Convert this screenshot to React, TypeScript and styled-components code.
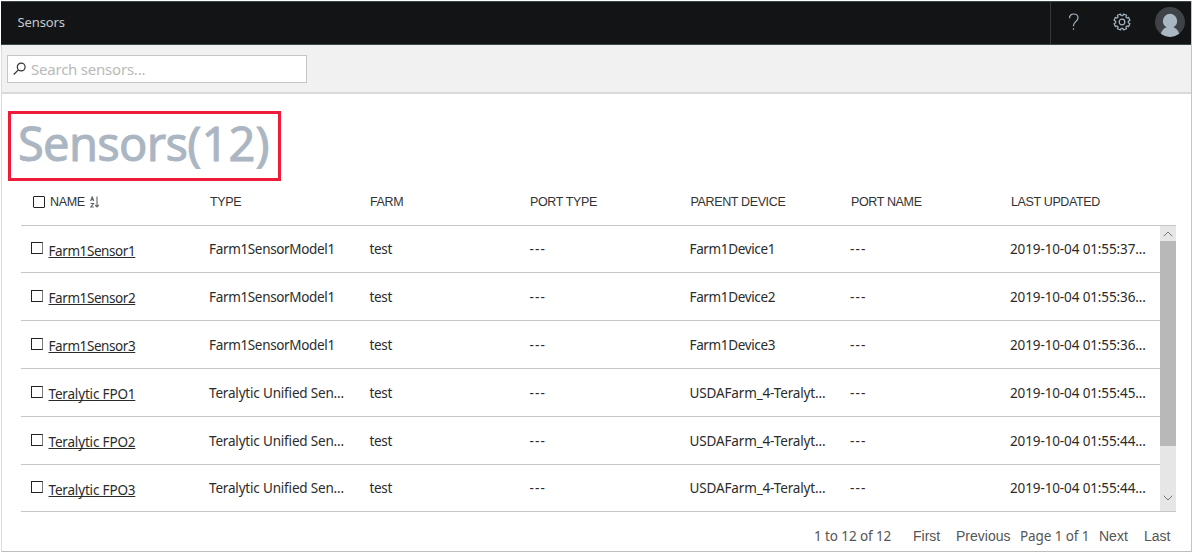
import React from "react";
import styled, { createGlobalStyle } from "styled-components";

const Global = createGlobalStyle`
  * { box-sizing: border-box; }
  body { margin: 0; background: #fff; }
  button, input { font: inherit; border: 0; padding: 0; background: none; }
`;

const Page = styled.div`
  width: 1192px;
  height: 552px;
  padding-top: 1px;
  display: flex;
  flex-direction: column;
  border-left: 1px solid #fff;
  overflow: hidden;
  font-family: "Noto Sans", "Open Sans", sans-serif;
  color: #2b2b2b;
`;

const Frame = styled.div`
  flex: 1;
  min-height: 0;
  display: flex;
  flex-direction: column;
  border-left: 1px solid #dcdcdc;
  border-right: 1px solid #c4c4c4;
  border-bottom: 1px solid #bdbdbd;
`;

const TopBar = styled.header`
  height: 44px;
  margin-left: -1px;
  flex: none;
  display: flex;
  align-items: center;
  background: #121416;
  border-top: 1px solid #3a4746;
  border-bottom: 1px solid #3a4746;
  color: #c3cad0;
`;

const TopTitle = styled.div`
  flex: 1;
  padding: 0 0 2px 16.5px;
  font-size: 13px;
  letter-spacing: -0.1px;
`;

const TopActions = styled.div`
  height: 100%;
  width: 141px;
  display: flex;
  align-items: center;
  border-left: 1px solid #34383b;
  padding: 0 0 3px 17px;

  svg { display: block; flex: none; }
  svg + svg { margin-left: 33px; }
  svg:last-child { margin-left: 24px; }
`;

const SearchBar = styled.div`
  height: 49px;
  flex: none;
  padding: 10px 0 0 5px;
  background: #f1f1f1;
  border-bottom: 2px solid #dadada;
`;

const SearchBox = styled.label`
  width: 300px;
  height: 28px;
  display: flex;
  align-items: center;
  background: #fff;
  border: 1px solid #c6c6c6;
  padding-left: 4px;
`;

const SearchInput = styled.input`
  flex: 1;
  min-width: 0;
  height: 24px;
  margin-left: 5px;
  outline: none;
  font-size: 15px;
  letter-spacing: -0.22px;
  &::placeholder { color: #b9b9b9; opacity: 1; }
`;

const Heading = styled.h1`
  width: 273px;
  height: 70px;
  margin: 17px 0 0 6px;
  padding-left: 7px;
  flex: none;
  border: 3px solid #ee1c3a;
  font-size: 47px;
  font-weight: 400;
  line-height: 59px;
  letter-spacing: -0.7px;
  color: #abb6c2;
  -webkit-text-stroke: 0.9px #abb6c2;
  white-space: nowrap;
`;

const Count = styled.span`
  letter-spacing: 0.1px;
`;

const Grid = styled.section`
  width: 1155px;
  margin-left: 19px;
  flex: none;
`;

const HeaderRow = styled.div`
  height: 45px;
  display: grid;
  grid-template-columns: 189px 160px 160px 160.5px 160.5px 160px 1fr;
  align-items: center;
  padding-bottom: 3px;
  border-bottom: 1px solid #c6c6c6;
  font: 12.5px "Liberation Sans", Arial, sans-serif;
  letter-spacing: -0.36px;
  color: #333;
`;

const NameHeader = styled.div`
  display: flex;
  align-items: center;
  padding-left: 12px;
  svg { margin-left: 5px; }
`;

const CheckBox = styled.span<{ $head?: boolean }>`
  width: 12px;
  height: 12px;
  flex: none;
  border: 1px solid #222;
  border-radius: ${(p) => (p.$head ? "1px" : "0")};
  margin-right: ${(p) => (p.$head ? "5px" : "5.5px")};
  ${(p) => !p.$head && "margin-top: -2px; border-right-color: #777;"}
`;

const Body = styled.div`
  display: flex;
  height: 286px;
`;

const Rows = styled.div`
  width: 1139px;
`;

const Row = styled.div<{ $height: number }>`
  height: ${(p) => p.$height}px;
  display: grid;
  grid-template-columns: 188px 160.5px 160px 160px 160.5px 160px 1fr;
  align-items: center;
  border-bottom: 1px solid #c6c6c6;
  font-size: 13.5px;
`;

const Cell = styled.div<{ $spacing?: number }>`
  white-space: nowrap;
  letter-spacing: ${(p) => p.$spacing ?? -0.34}px;
`;

const NameCell = styled.div`
  display: flex;
  align-items: center;
  padding-left: 10px;
`;

const NameLink = styled.a<{ $spacing: number }>`
  margin-top: 3px;
  line-height: 16px;
  white-space: nowrap;
  letter-spacing: ${(p) => p.$spacing}px;
  text-decoration: underline;
  text-decoration-skip-ink: none;
  text-underline-offset: 1px;
  text-decoration-thickness: 1px;
`;

const ScrollBar = styled.div`
  width: 16px;
  display: flex;
  flex-direction: column;
  background: #e6e6e6;
  border-bottom: 1px solid #c6c6c6;
`;

const ScrollButton = styled.div`
  height: 15px;
  display: flex;
  align-items: center;
  justify-content: center;
`;

const Thumb = styled.div`
  height: 205px;
  margin-bottom: 44px;
  background: #b8b8b8;
`;

const Pager = styled.footer`
  height: 39px;
  display: flex;
  align-items: center;
  padding: 8px 17px 0 812px;
  color: #555;
  white-space: nowrap;
`;

const PagerText = styled.span<{ $width: number }>`
  width: ${(p) => p.$width}px;
  font-size: 13.5px;
  letter-spacing: -0.1px;
`;

const PagerButton = styled.button<{ $width: number }>`
  && {
    width: ${(p) => p.$width}px;
    text-align: left;
    font: 14px "Liberation Sans", Arial, sans-serif;
    color: #555;
  }
`;

const headers = ["TYPE", "FARM", "PORT TYPE", "PARENT DEVICE", "PORT NAME", "LAST UPDATED"];

const unified = "Teralytic Unified Sen...";
const usda = "USDAFarm_4-Teralyt...";

const sensors = [
  { name: "Farm1Sensor1", type: "Farm1SensorModel1", parent: "Farm1Device1", updated: "2019-10-04 01:55:37...", height: 47 },
  { name: "Farm1Sensor2", type: "Farm1SensorModel1", parent: "Farm1Device2", updated: "2019-10-04 01:55:36...", height: 48 },
  { name: "Farm1Sensor3", type: "Farm1SensorModel1", parent: "Farm1Device3", updated: "2019-10-04 01:55:36...", height: 48 },
  { name: "Teralytic FPO1", type: unified, parent: usda, updated: "2019-10-04 01:55:45...", height: 48 },
  { name: "Teralytic FPO2", type: unified, parent: usda, updated: "2019-10-04 01:55:44...", height: 48 },
  { name: "Teralytic FPO3", type: unified, parent: usda, updated: "2019-10-04 01:55:44...", height: 47 },
];

const HelpIcon = () => (
  <svg width="12" height="18" viewBox="0 0 12 18" fill="none" stroke="#a9b7c1" strokeWidth="1.2">
    <path d="M1.5 5.2C1.5 2.5 3.3 1 5.7 1s4.3 1.5 4.3 3.9c0 3.5-4.5 4-4.5 7.5v.8M5.5 15.3v1.5" />
  </svg>
);

const teeth = Array.from({ length: 8 }, (_, i) => {
  const point = (r: number, deg: number) => {
    const a = ((i * 45 + 22.5 + deg) * Math.PI) / 180;
    return `${(9 + r * Math.cos(a)).toFixed(2)} ${(9 + r * Math.sin(a)).toFixed(2)}`;
  };
  return `${i ? "L" : "M"}${point(6.6, -14)}L${point(8.1, -12)}L${point(8.1, 12)}L${point(6.6, 14)}L${point(6.2, 22.5)}`;
}).join("");

const GearIcon = () => (
  <svg width="18" height="18" viewBox="0 0 18 18" fill="none" stroke="#a9b7c1" strokeWidth="1.2" strokeLinejoin="round">
    <path d={`${teeth}Z`} />
    <circle cx="9" cy="9" r="2.8" />
  </svg>
);

const Avatar = () => (
  <svg width="30" height="30" viewBox="0 0 30 30">
    <circle cx="15" cy="15" r="15" fill="#3f4348" />
    <circle cx="15" cy="14" r="7.2" fill="#a9b7c3" />
    <path d="M5.8 26.8c1-3.5 3.2-5.8 6.2-6.8h6c3 1 5.2 3.3 6.2 6.8A15 15 0 0 1 5.8 26.8Z" fill="#a9b7c3" />
  </svg>
);

const SearchIcon = () => (
  <svg width="14" height="14" viewBox="0 0 14 14" fill="none" stroke="#333" strokeWidth="1.2">
    <circle cx="9.2" cy="5" r="3.9" />
    <path d="M6.4 7.8 1.7 12.5" />
  </svg>
);

const SortIcon = () => (
  <svg width="10" height="12" viewBox="0 0 10 12" fill="none" stroke="#666" strokeWidth="1.1">
    <path d="M.6 5 2.2.8 3.8 5M1.2 3.6h2M.6 7.5h3L.8 11h3M7 .5v10.3M5.2 9 7 10.9 8.8 9" />
  </svg>
);

const Chevron = ({ down }: { down?: boolean }) => (
  <svg width="10" height="6" viewBox="0 0 10 6" fill="none" stroke="#777" strokeWidth="1">
    <path d={down ? "M.7.7 5 5 9.3.7" : "M.7 5.3 5 1 9.3 5.3"} />
  </svg>
);

export default function App() {
  return (
    <>
      <Global />
      <Page>
        <Frame>
          <TopBar>
            <TopTitle>Sensors</TopTitle>
            <TopActions>
              <HelpIcon />
              <GearIcon />
              <Avatar />
            </TopActions>
          </TopBar>
          <SearchBar>
            <SearchBox>
              <SearchIcon />
              <SearchInput placeholder="Search sensors..." />
            </SearchBox>
          </SearchBar>
          <Heading>
            Sensors<Count>(12)</Count>
          </Heading>
          <Grid>
            <HeaderRow>
              <NameHeader>
                <CheckBox $head />
                NAME
                <SortIcon />
              </NameHeader>
              {headers.map((h) => (
                <span key={h}>{h}</span>
              ))}
            </HeaderRow>
            <Body>
              <Rows>
                {sensors.map((s) => (
                  <Row key={s.name} $height={s.height}>
                    <NameCell>
                      <CheckBox />
                      <NameLink $spacing={s.name.startsWith("Farm") ? -0.42 : -0.17}>{s.name}</NameLink>
                    </NameCell>
                    <Cell $spacing={s.type === unified ? -0.18 : undefined}>{s.type}</Cell>
                    <Cell>test</Cell>
                    <Cell $spacing={1.2}>---</Cell>
                    <Cell $spacing={s.parent === usda ? -0.14 : -0.36}>{s.parent}</Cell>
                    <Cell $spacing={1.2}>---</Cell>
                    <Cell $spacing={-0.12}>{s.updated}</Cell>
                  </Row>
                ))}
              </Rows>
              <ScrollBar>
                <ScrollButton><Chevron /></ScrollButton>
                <Thumb />
                <ScrollButton><Chevron down /></ScrollButton>
              </ScrollBar>
            </Body>
          </Grid>
          <Pager>
            <PagerText $width={99}>1 to 12 of 12</PagerText>
            <PagerButton $width={43}>First</PagerButton>
            <PagerButton $width={64}>Previous</PagerButton>
            <PagerText $width={79}>Page 1 of 1</PagerText>
            <PagerButton $width={45}>Next</PagerButton>
            <PagerButton $width={29}>Last</PagerButton>
          </Pager>
        </Frame>
      </Page>
    </>
  );
}
